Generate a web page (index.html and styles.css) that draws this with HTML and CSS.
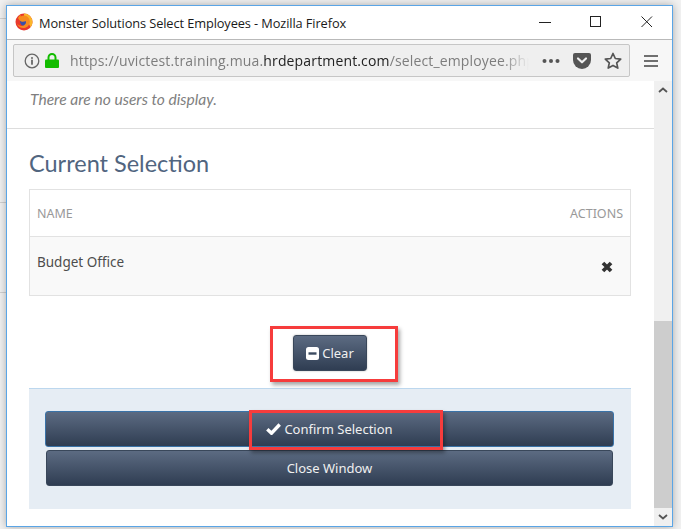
FILE: index.html
```html
<!DOCTYPE html>
<html lang="en">
<head>
<meta charset="utf-8">
<title>Monster Solutions Select Employees - Mozilla Firefox</title>
<link rel="stylesheet" href="styles.css">
</head>
<body>
<div class="desk">
  <div class="desk-line line-a"></div>
  <div class="desk-line line-b"></div>
  <div class="desk-line line-c"></div>
  <div class="window">
    <header class="titlebar">
      <svg class="fx-logo" viewBox="0 0 18 18" width="18" height="18">
        <circle cx="9" cy="9" r="8.5" fill="#e8392c"/>
        <path d="M9 .5a8.5 8.5 0 0 1 8.5 8.5c0 2-.7 3.8-1.900 5.300L13 9 9 5z" fill="#fbb52b"/>
        <circle cx="9.400" cy="8.800" r="4.300" fill="#3a4fa8"/>
        <path d="M3 5c1-2 2-3 3-3.500-.5 1-.5 1.500-.3 2 2-1.500 5-1.500 7 .5 1.500 1.500 2.500 3.500 2 6-.7 3-3.500 5-6.500 5-3 0-5.500-2-6.200-4.500 1.500 2 4.500 3 6.700 2 2-1 2.800-2.800 2-4.500-1 .8-3 1-4.500.5C4.500 7.500 3.700 6.500 3 5z" fill="#f68b1f"/>
      </svg>
      <span class="title-text">Monster Solutions Select Employees - Mozilla Firefox</span>
      <div class="caption-buttons">
        <svg viewBox="0 0 12 12" width="12" height="12"><path d="M0 6.500h12" stroke="#222" stroke-width="1" fill="none"/></svg>
        <svg viewBox="0 0 12 12" width="12" height="12"><rect x=".5" y=".5" width="10" height="10" stroke="#222" fill="none"/></svg>
        <svg viewBox="0 0 12 12" width="12" height="12"><path d="M.5.500l10.500 10.500M11 .500L.5 11" stroke="#222" fill="none"/></svg>
      </div>
    </header>

    <nav class="toolbar">
      <div class="urlbar">
        <svg class="info-icon" viewBox="0 0 16 16" width="16" height="16">
          <circle cx="8" cy="8" r="6.800" stroke="#666" stroke-width="1.300" fill="none"/>
          <circle cx="8" cy="4.900" r="1" fill="#666"/>
          <rect x="7.100" y="6.700" width="1.800" height="5" fill="#666"/>
        </svg>
        <svg class="lock-icon" viewBox="0 0 14 15" width="14" height="15">
          <path d="M3.500 7V4.500a3.500 3.500 0 0 1 7 0V7" stroke="#12bc00" stroke-width="2" fill="none"/>
          <rect x="0" y="6.500" width="14" height="8.500" rx="1" fill="#12bc00"/>
        </svg>
        <div class="url"><span class="url-dim">https://uvictest.training.mua.</span><span class="url-host">hrdepartment.com</span><span class="url-dim">/select_employee.php</span></div>
        <svg class="url-icon" viewBox="0 0 18 6" width="18" height="6">
          <circle cx="2.500" cy="3" r="2" fill="#555"/><circle cx="9" cy="3" r="2" fill="#555"/><circle cx="15.500" cy="3" r="2" fill="#555"/>
        </svg>
        <svg class="url-icon" viewBox="0 0 18 16" width="18" height="16">
          <path d="M2 0h14a2 2 0 0 1 2 2v5a9 9 0 0 1-18 0V2a2 2 0 0 1 2-2z" fill="#555"/>
          <path d="M5 5.500l4 3.800 4-3.800" stroke="#f0f0f0" stroke-width="2.200" stroke-linecap="round" stroke-linejoin="round" fill="none"/>
        </svg>
        <svg class="url-icon" viewBox="0 0 18 17" width="18" height="17">
          <path d="M9 1.500l2.300 5 5.400.6-4 3.700 1.100 5.300L9 13.400l-4.800 2.700 1.100-5.300-4-3.700 5.400-.6z" stroke="#555" stroke-width="1.700" stroke-linejoin="round" fill="none"/>
        </svg>
      </div>
      <svg class="menu-icon" viewBox="0 0 14 12" width="14" height="12">
        <path d="M0 1h14M0 6h14M0 11h14" stroke="#444" stroke-width="1.700"/>
      </svg>
    </nav>

    <div class="viewport">
      <main class="page">
        <p class="empty-note">There are no users to display.</p>
        <section class="selection">
          <h2 class="selection-title">Current Selection</h2>
          <div class="selection-table">
            <div class="table-head"><span>NAME</span><span>ACTIONS</span></div>
            <div class="table-row">
              <span class="row-name">Budget Office</span>
              <svg class="row-remove" viewBox="0 0 11 11" width="12" height="12">
                <path d="M1.800 1.800l7.400 7.400M9.200 1.800l-7.400 7.400" stroke="#333" stroke-width="3.400"/>
              </svg>
            </div>
          </div>
          <div class="clear-area">
            <button class="btn btn-clear" type="button">
              <svg viewBox="0 0 13 13" width="13" height="13"><rect width="13" height="13" rx="2.500" fill="#fff"/><rect x="2.500" y="5.300" width="8" height="2.400" fill="#3b4a60"/></svg>
              Clear
            </button>
            <div class="callout callout-clear"></div>
          </div>
          <div class="action-panel">
            <div class="confirm-wrap">
              <button class="btn btn-wide btn-confirm" type="button">
                <svg viewBox="0 0 15 12" width="15" height="12"><path d="M1.300 6.200l4.200 4L13.700 1.500" stroke="#fff" stroke-width="3.400" fill="none"/></svg>
                Confirm Selection
              </button>
              <div class="callout callout-confirm"></div>
            </div>
            <button class="btn btn-wide btn-close" type="button">Close Window</button>
          </div>
        </section>
      </main>
      <div class="scrollbar">
        <svg class="scroll-arrow" viewBox="0 0 10 6" width="10" height="6"><path d="M1 5l4-3.500L9 5" stroke="#555" stroke-width="1.800" fill="none"/></svg>
        <div class="scroll-track"><div class="scroll-thumb"></div></div>
        <svg class="scroll-arrow" viewBox="0 0 10 6" width="10" height="6"><path d="M1 1l4 3.500L9 1" stroke="#555" stroke-width="1.800" fill="none"/></svg>
      </div>
    </div>
  </div>
</div>
</body>
</html>
```
FILE: styles.css
```css
* { box-sizing: border-box; }

html, body {
  margin: 0;
  height: 100%;
  overflow: hidden;
}

/* Desktop behind the popup */
.desk {
  position: relative;
  width: 681px;
  height: 529px;
  padding: 5px 8px 2px 6px;
  background: #f1f1f1;
}

.desk-line {
  position: absolute;
  left: 0;
  width: 6px;
  height: 1px;
  background: #d0d0d0;
}
.line-a { top: 18px; }
.line-b { top: 202px; }
.line-c { top: 292px; }

/* Browser window */
.window {
  position: relative;
  display: flex;
  flex-direction: column;
  width: 667px;
  height: 522px;
  border: 1px solid #5aa5e6;
  background: #fff;
  box-shadow: 0 0 8px rgba(0, 0, 0, .3);
  font-family: "Noto Sans", sans-serif;
}

.titlebar {
  display: flex;
  align-items: center;
  height: 34px;
  flex: none;
  padding-left: 8px;
  border-bottom: 1px solid #b9b9b9;
}

.fx-logo {
  margin-right: 6px;
  margin-bottom: 2px;
}

.title-text {
  font-family: "Open Sans", sans-serif;
  font-size: 12.800px;
  color: #1a1a1a;
  letter-spacing: -.1px;
}

.caption-buttons {
  display: flex;
  gap: 39px;
  margin-left: auto;
  margin-right: 19px;
  margin-bottom: 2px;
  align-items: center;
}

.toolbar {
  display: flex;
  align-items: center;
  flex: none;
  height: 41px;
  padding: 0 12px 0 6px;
  background: #f7f7f7;
}

.urlbar {
  display: flex;
  align-items: center;
  width: 617px;
  height: 33px;
  padding-left: 10px;
  border: 1px solid #c6c6c6;
  border-radius: 2px;
  background: #efefef;
}

.lock-icon { margin-left: 5px; }

.url {
  width: 459px;
  margin-left: 11px;
  overflow: hidden;
  white-space: nowrap;
  font-family: "Open Sans", sans-serif;
  font-size: 14px;
  letter-spacing: .15px;
  -webkit-mask-image: linear-gradient(to right, #000 94%, transparent);
  mask-image: linear-gradient(to right, #000 94%, transparent);
}
.url-dim { color: #7d7d7d; }
.url-host { color: #222; }

.url-icon { margin-left: 13px; flex: none; }
.url-icon:first-of-type { margin-left: 0; }

.menu-icon { margin-left: 14px; flex: none; }

.viewport {
  display: flex;
  flex: 1;
  min-height: 0;
}

.page {
  flex: 1;
  min-width: 0;
}

.empty-note {
  height: 48px;
  margin: 0;
  padding: 9px 23px 0;
  border-bottom: 1px solid #ddd;
  font-family: "Lato", sans-serif;
  font-size: 15.600px;
  line-height: 19px;
  font-style: italic;
  color: #7f7f7f;
}

.selection { padding: 0 23px 0 22px; }

.selection-title {
  margin: 19px 0 11px;
  font-family: "Lato", sans-serif;
  font-size: 23.500px;
  line-height: 30px;
  font-weight: 400;
  color: #51657f;
}

.selection-table {
  border: 1px solid #e2e2e2;
  font-size: 13.500px;
}

.table-head {
  display: flex;
  justify-content: space-between;
  align-items: center;
  height: 47px;
  padding: 0 7px;
  border-bottom: 1px solid #e2e2e2;
  font-size: 12.500px;
  color: #999;
}

.table-row {
  position: relative;
  height: 58px;
  padding: 16px 7px;
  background: #f9f9f9;
  color: #4d4d4d;
}

.row-remove {
  position: absolute;
  right: 17px;
  top: 24px;
}

.clear-area {
  position: relative;
  display: flex;
  justify-content: center;
  padding: 39px 0 17px;
}

.btn {
  display: flex;
  align-items: center;
  justify-content: center;
  gap: 3px;
  height: 36px;
  border: 1px solid #39475a;
  border-radius: 3px;
  background: linear-gradient(#5c6b82, #2f3d52);
  color: #f0f0f0;
  font-family: "Noto Sans", sans-serif;
  font-size: 13px;
}

.btn-clear {
  width: 74px;
  box-shadow: 0 0 2px rgba(0, 0, 0, .3);
}

.action-panel {
  display: flex;
  flex-direction: column;
  gap: 3px;
  height: 121px;
  padding: 22px 16px 0;
  border-top: 1px solid #bcd7ee;
  background: #e6edf4;
}

.confirm-wrap { position: relative; }

.btn-wide { width: 569px; }

.btn-confirm { border-color: #3a73a8; }

.btn-close {
  width: 567px;
  margin-left: 1px;
}

/* Red annotation frames drawn over the buttons */
.callout {
  position: absolute;
  border: 3px solid #f63c3c;
  box-shadow: 2px 3px 4px rgba(0, 0, 0, .35);
  pointer-events: none;
}
.callout-clear {
  left: 241px;
  top: 30px;
  width: 128px;
  height: 56px;
}
.callout-confirm {
  left: 204px;
  top: -1px;
  width: 194px;
  height: 40px;
}

.scrollbar {
  display: flex;
  flex-direction: column;
  align-items: center;
  flex: none;
  width: 18px;
  background: #f0f0f0;
}

.scroll-arrow {
  flex: none;
  margin: 6px 0;
}

.scroll-track {
  flex: 1;
  width: 100%;
  display: flex;
  align-items: flex-end;
}

.scroll-thumb {
  width: 100%;
  height: 187px;
  background: #cdcdcd;
}
```
